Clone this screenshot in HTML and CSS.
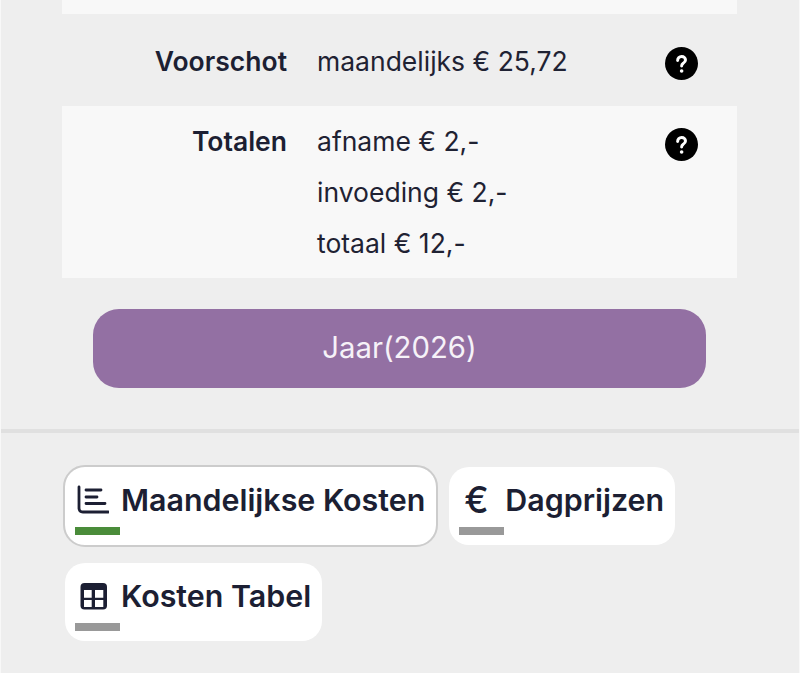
FILE: index.html
```html
<!DOCTYPE html>
<html lang="nl">
<head>
	<meta charset="utf-8" />
	<title>Kosten</title>
	<link rel="stylesheet" href="styles.css">
</head>
<body>
	<main class="pagina">
		<section class="tabel">
			<div class="rij rij-licht rij-top"></div>
			<div class="rij rij-voorschot">
				<div class="label">Voorschot</div>
				<div class="waarden"><div>maandelijks € 25,72</div></div>
				<div class="hulp">
					<svg viewBox="0 0 512 512" width="33" height="33"><circle cx="256" cy="256" r="256" fill="#000"/><path d="M196 210c0-36 28-62 62-62 36 0 60 24 60 54 0 28-18 40-36 52-16 10-24 18-24 40" fill="none" stroke="#fff" stroke-width="46" stroke-linecap="round"/><circle cx="258" cy="372" r="28" fill="#fff"/></svg>
				</div>
			</div>
			<div class="rij rij-licht rij-totalen">
				<div class="label">Totalen</div>
				<div class="waarden">
					<div>afname € 2,-</div>
					<div>invoeding € 2,-</div>
					<div>totaal € 12,-</div>
				</div>
				<div class="hulp">
					<svg viewBox="0 0 512 512" width="33" height="33"><circle cx="256" cy="256" r="256" fill="#000"/><path d="M196 210c0-36 28-62 62-62 36 0 60 24 60 54 0 28-18 40-36 52-16 10-24 18-24 40" fill="none" stroke="#fff" stroke-width="46" stroke-linecap="round"/><circle cx="258" cy="372" r="28" fill="#fff"/></svg>
				</div>
			</div>
		</section>
		<div class="knop-vak">
			<button class="knop">Jaar(2026)</button>
		</div>
		<hr class="lijn">
		<nav class="tabs">
			<div class="tab tab-actief">
				<div class="tab-kop">
					<svg class="tab-icoon" viewBox="0 0 34 30" width="34" height="30"><path d="M4 3v21c0 2.800 1.400 4 4 4h25.500M11 6h15M11 13h11M11 19.500h19" fill="none" stroke="#1c1f33" stroke-width="2.800" stroke-linecap="round"/></svg>
					<span>Maandelijkse Kosten</span>
				</div>
				<div class="streep streep-groen"></div>
			</div>
			<div class="tab">
				<div class="tab-kop">
					<span class="euro">€</span>
					<span>Dagprijzen</span>
				</div>
				<div class="streep"></div>
			</div>
			<div class="tab">
				<div class="tab-kop">
					<svg class="tab-icoon" viewBox="0 0 34 30" width="34" height="30"><rect x="5.500" y="3" width="26.500" height="26.500" rx="4" fill="#1c1f33"/><path d="M9 10h7.700v7.700h-7.700zM20 10h8.300v7.700h-8.300zM20 20h8.300v7h-8.300zM9 20h7.700v7h-7.700z" fill="#fff"/></svg>
					<span>Kosten Tabel</span>
				</div>
				<div class="streep"></div>
			</div>
		</nav>
	</main>
</body>
</html>
```

FILE: styles.css
```css
html, body {
	margin: 0;
	padding: 0;
	height: 673px;
	overflow: hidden;
}
body {
	background: #eeeeee;
	font-family: Inter, "Liberation Sans", sans-serif;
	color: #1c1f33;
}
.pagina {
	height: 673px;
	border-left: 1px solid #f8f8f8;
	border-right: 1px solid #f8f8f8;
	box-sizing: border-box;
}
.tabel {
	margin: 0 62px 0 61px;
}
.rij {
	display: grid;
	grid-template-columns: 225px 1fr 33px;
	column-gap: 30px;
	padding-right: 39px;
	box-sizing: border-box;
	font-size: 26.5px;
}
.rij-licht {
	background: #f8f8f8;
}
.rij-top {
	height: 14px;
}
.rij-voorschot {
	height: 92px;
	padding-top: 22px;
}
.rij-totalen {
	height: 172px;
	padding-top: 10px;
}
.label {
	font-weight: 600;
	text-align: right;
	line-height: 51px;
}
.waarden {
	line-height: 51px;
	color: #1f2233;
}
.hulp {
	padding-top: 11px;
}
.rij-totalen .hulp {
	padding-top: 12px;
}
.hulp svg {
	display: block;
}
.knop-vak {
	padding: 31px 92px 41px 92px;
}
.knop {
	display: block;
	width: 613px;
	height: 79px;
	padding: 0 0 2px 0;
	border: 0;
	border-radius: 26px;
	background: #9370a3;
	color: #f6f2f8;
	font-family: inherit;
	font-size: 29.3px;
}
.lijn {
	border: 0;
	height: 4px;
	margin: 0;
	background: #e0e0e0;
}
.tabs {
	display: flex;
	flex-wrap: wrap;
	align-items: flex-start;
	padding: 32px 0 0 62px;
	row-gap: 14px;
	column-gap: 9px;
}
.tab {
	background: #fff;
	background-clip: padding-box;
	border: 2px solid transparent;
	border-radius: 22px;
	box-sizing: border-box;
	height: 82px;
	padding: 13px 11px 0 10px;
}
.tab-actief {
	border-color: #cccccc;
}
.tab-kop {
	display: flex;
	align-items: center;
	gap: 12px;
	height: 38px;
	font-size: 30.4px;
	font-weight: 600;
	white-space: nowrap;
}
.tab-kop span {
	padding-top: 2px;
}
.tab-icoon {
	flex: none;
}
.euro {
	width: 34px;
	font-size: 36.500px;
	font-weight: 500;
	padding-left: 5px;
	box-sizing: border-box;
}
.streep {
	width: 45px;
	height: 8px;
	margin-top: 9px;
	background: #999999;
}
.streep-groen {
	background: #4a8c3a;
}
```
